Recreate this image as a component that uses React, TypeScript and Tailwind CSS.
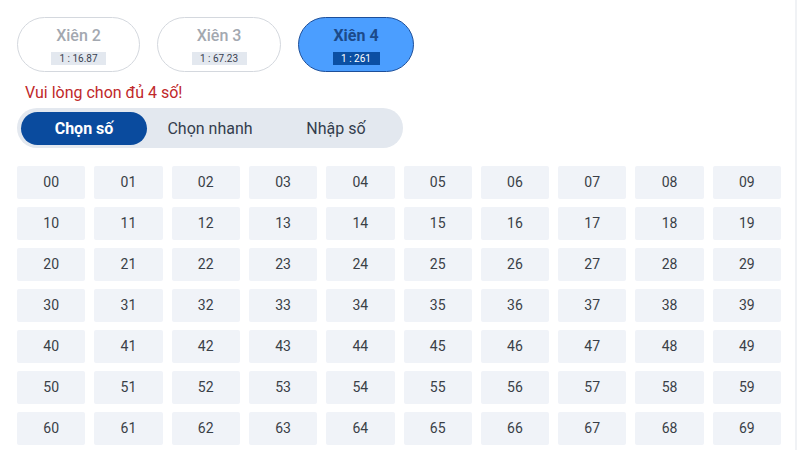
import React from "react";

const nums = Array.from({ length: 70 }, (_, i) => String(i).padStart(2, "0"));

export default function App() {
  return (
    <div
      className="relative w-[800px] h-[450px] overflow-hidden bg-white"
      style={{ fontFamily: "Roboto, 'Liberation Sans', sans-serif" }}
    >
      <div className="absolute right-[3px] top-0 h-full w-[2px] bg-[#f0f2f5]" />
      <div className="pl-[17px] pt-[17px]">
        <div className="flex gap-[17px]">
          <div className="w-[123px] h-[55px] pt-[3px] rounded-full border border-[#d4d8de] bg-white flex flex-col items-center justify-center">
            <div className="text-[16px] leading-[18px] font-medium text-[#a3a8b0]">Xiên 2</div>
            <div className="mt-[7px] w-[55px] h-[13px] bg-[#e3e8ef] text-[10px] leading-[13px] text-[#3a4150] text-center">1 : 16.87</div>
          </div>
          <div className="w-[124px] h-[55px] pt-[3px] rounded-full border border-[#d4d8de] bg-white flex flex-col items-center justify-center">
            <div className="text-[16px] leading-[18px] font-medium text-[#a3a8b0]">Xiên 3</div>
            <div className="mt-[7px] w-[55px] h-[13px] bg-[#e3e8ef] text-[10px] leading-[13px] text-[#3a4150] text-center">1 : 67.23</div>
          </div>
          <div className="w-[116px] h-[55px] pt-[3px] rounded-full border border-[#1d4f9a] bg-[#4b9eff] flex flex-col items-center justify-center">
            <div className="text-[16px] leading-[18px] font-bold text-[#1c4a8a]">Xiên 4</div>
            <div className="mt-[7px] w-[47px] h-[13px] bg-[#0b4fa3] text-[10px] leading-[13px] text-white text-center">1 : 261</div>
          </div>
        </div>
        <div className="mt-[10px] ml-[8px] text-[16px] leading-[22px] text-[#c0282a]">Vui lòng chon đủ 4 số!</div>
        <div className="mt-[4px] w-[386px] h-[40px] rounded-full bg-[#e3e8ef] p-[4px] flex">
          <div className="w-[126px] h-[33px] rounded-full bg-[#0a4b9e] flex items-center justify-center text-white font-bold text-[16px]">Chọn số</div>
          <div className="w-[126px] h-[33px] flex items-center justify-center text-[#333d4d] text-[16px]">Chọn nhanh</div>
          <div className="w-[126px] h-[33px] flex items-center justify-center text-[#333d4d] text-[16px]">Nhập số</div>
        </div>
        <div className="mt-[18px] w-[764px] grid grid-cols-10 gap-x-[9px] gap-y-[8px]">
          {nums.map((n) => (
            <div
              key={n}
              className="h-[33px] rounded-[2px] bg-[#f0f3f8] flex items-center justify-center text-[14px] text-[#3a3f47]"
            >
              {n}
            </div>
          ))}
        </div>
      </div>
    </div>
  );
}
